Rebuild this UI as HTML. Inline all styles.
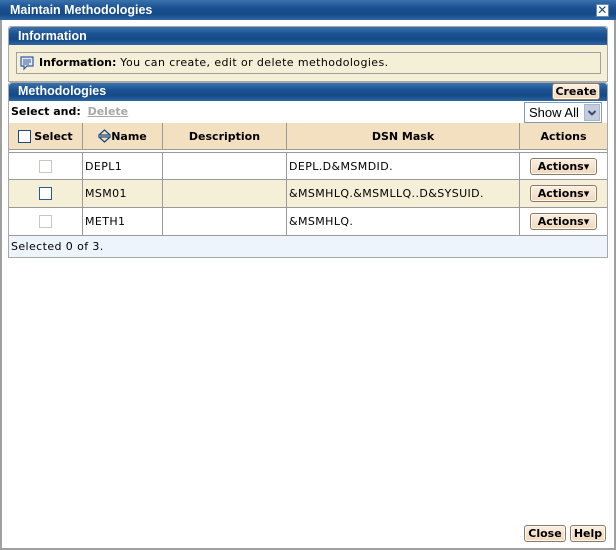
<!DOCTYPE html>
<html><head><meta charset="utf-8">
<style>
*{margin:0;padding:0;box-sizing:border-box}
body{width:616px;height:550px;background:#fff;font-family:"DejaVu Sans","Liberation Sans",sans-serif;font-size:11px;letter-spacing:0.4px;color:#000;position:relative;overflow:hidden}
b,.btn,.hdr{letter-spacing:0}
.abs{position:absolute}
.blue{background:linear-gradient(#3a72ac 0%,#1a5192 40%,#154a87 70%,#2d67a3 100%);color:#fff;font-weight:bold;font-family:"Liberation Sans",sans-serif;letter-spacing:0}
.btn{position:absolute;background:linear-gradient(#fbefe0,#f0d8bc);border:1px solid #8a7a68;border-radius:3px;font-weight:bold;font-size:11px;text-align:center;box-shadow:inset 0 0 0 1px #fff8ee}
.cell{position:absolute;border-right:1px solid #9a9a9a;height:100%;top:0;display:flex;align-items:center}
.cb{width:13px;height:13px;border:1px solid #c8c8c0;background:#fff}
</style></head><body>
<div class="abs" style="left:0;top:0;width:616px;height:550px;border:2px solid #a0a0a0;border-top:none"></div>
<div class="abs blue" style="left:0;top:0;width:616px;height:20px;font-size:12.5px;padding:3px 0 0 10px;">Maintain Methodologies</div>
<div class="abs" style="left:596px;top:4px;width:13px;height:13px;background:#fff;border:1px solid #6a8ab0;color:#1a4a80;font-size:12px;line-height:10px;text-align:center;font-weight:bold">✕</div>

<div class="abs" style="left:8px;top:26px;width:600px;height:56px;border:1px solid #a8a8a8;background:#f5efd8;border-radius:3px 3px 0 0"></div>
<div class="abs blue" style="left:9px;top:27px;width:598px;height:18px;padding:2px 0 0 9px;font-size:12.5px;border-radius:3px 3px 0 0">Information</div>
<div class="abs" style="left:16px;top:52px;width:585px;height:22px;border:1px solid #a0a0a0;background:#f5efd8;padding:3px 0 0 22px"><b>Information:</b> You can create, edit or delete methodologies.</div>
<svg class="abs" style="left:19px;top:55px" width="16" height="16" viewBox="0 0 16 16"><path d="M2 2h12v9H8l-3 3v-3H2z" fill="#dde8f8" stroke="#3a5a9a" stroke-width="1.2"/><path d="M4 5h8M4 7h8M4 9h6" stroke="#3a5a9a"/></svg>

<div class="abs" style="left:8px;top:82px;width:600px;height:176px;border:1px solid #a8a8a8;border-radius:3px 3px 0 0"></div>
<div class="abs blue" style="left:9px;top:83px;width:598px;height:18px;padding:1px 0 0 9px;font-size:12.5px;border-radius:3px 3px 0 0">Methodologies</div>
<div class="btn" style="left:552px;top:83px;width:48px;height:17px;line-height:15px">Create</div>
<div class="abs hdr" style="left:11px;top:105px;font-weight:bold">Select and: <span style="color:#a8a8a8;text-decoration:underline;margin-left:3px">Delete</span></div>
<div class="abs" style="left:524px;top:102px;width:78px;height:21px;border:1px solid #7f9db9;background:#fff;font-family:'Liberation Sans',sans-serif;font-size:13px;letter-spacing:0;padding:2px 0 0 4px">Show All</div>
<div class="abs" style="left:584px;top:104px;width:16px;height:17px;background:#c4cce0;border:1px solid #aab4cc"><svg width="14" height="15" viewBox="0 0 14 15"><path d="M3.5 6l3.5 3.5L10.5 6" fill="none" stroke="#3a4a6a" stroke-width="2"/></svg></div>

<div class="abs hdr" style="left:9px;top:123px;width:598px;height:27px;background:#f2e0c0;border-bottom:1px solid #9a9a9a;font-weight:bold">
 <div class="cell" style="left:0;width:74px;justify-content:center"><span class="cb" style="border-color:#1a4a80;display:inline-block;margin-right:3px"></span>Select</div>
 <div class="cell" style="left:74px;width:80px;justify-content:center"><svg width="13" height="14" viewBox="0 0 13 14"><path d="M1 6L6.5 1 12 6zM1 8l5.5 5 5.5-5z" fill="none" stroke="#1a4a80" stroke-width="1.3"/></svg>Name</div>
 <div class="cell" style="left:154px;width:124px;justify-content:center">Description</div>
 <div class="cell" style="left:278px;width:233px;justify-content:center">DSN Mask</div>
 <div class="cell" style="left:511px;width:87px;justify-content:center;border:none">Actions</div>
</div>

<div class="abs" style="left:9px;top:152px;width:598px;height:28px;border-top:1px solid #9a9a9a;border-bottom:1px solid #9a9a9a;background:#fff">
 <div class="cell" style="left:0;width:74px;justify-content:center"><span class="cb"></span></div>
 <div class="cell" style="left:74px;width:80px;padding-left:2px">DEPL1</div>
 <div class="cell" style="left:154px;width:124px"></div>
 <div class="cell" style="left:278px;width:233px;padding-left:2px">DEPL.D&amp;MSMDID.</div>
 <div class="btn" style="left:521px;top:5px;width:67px;height:17px;line-height:15px">Actions▾</div>
</div>
<div class="abs" style="left:9px;top:180px;width:598px;height:28px;border-bottom:1px solid #9a9a9a;background:#f5efd8">
 <div class="cell" style="left:0;width:74px;justify-content:center"><span class="cb" style="border-color:#2a5a90"></span></div>
 <div class="cell" style="left:74px;width:80px;padding-left:2px">MSM01</div>
 <div class="cell" style="left:154px;width:124px"></div>
 <div class="cell" style="left:278px;width:233px;padding-left:2px">&amp;MSMHLQ.&amp;MSMLLQ..D&amp;SYSUID.</div>
 <div class="btn" style="left:521px;top:5px;width:67px;height:17px;line-height:15px">Actions▾</div>
</div>
<div class="abs" style="left:9px;top:208px;width:598px;height:28px;border-bottom:1px solid #9a9a9a;background:#fff">
 <div class="cell" style="left:0;width:74px;justify-content:center"><span class="cb"></span></div>
 <div class="cell" style="left:74px;width:80px;padding-left:2px">METH1</div>
 <div class="cell" style="left:154px;width:124px"></div>
 <div class="cell" style="left:278px;width:233px;padding-left:2px">&amp;MSMHLQ.</div>
 <div class="btn" style="left:521px;top:5px;width:67px;height:17px;line-height:15px">Actions▾</div>
</div>
<div class="abs" style="left:9px;top:236px;width:598px;height:21px;background:#eef4fc;padding:4px 0 0 2px">Selected 0 of 3.</div>

<div class="btn" style="left:524px;top:525px;width:42px;height:17px;line-height:15px">Close</div>
<div class="btn" style="left:570px;top:525px;width:36px;height:17px;line-height:15px">Help</div>
</body></html>
